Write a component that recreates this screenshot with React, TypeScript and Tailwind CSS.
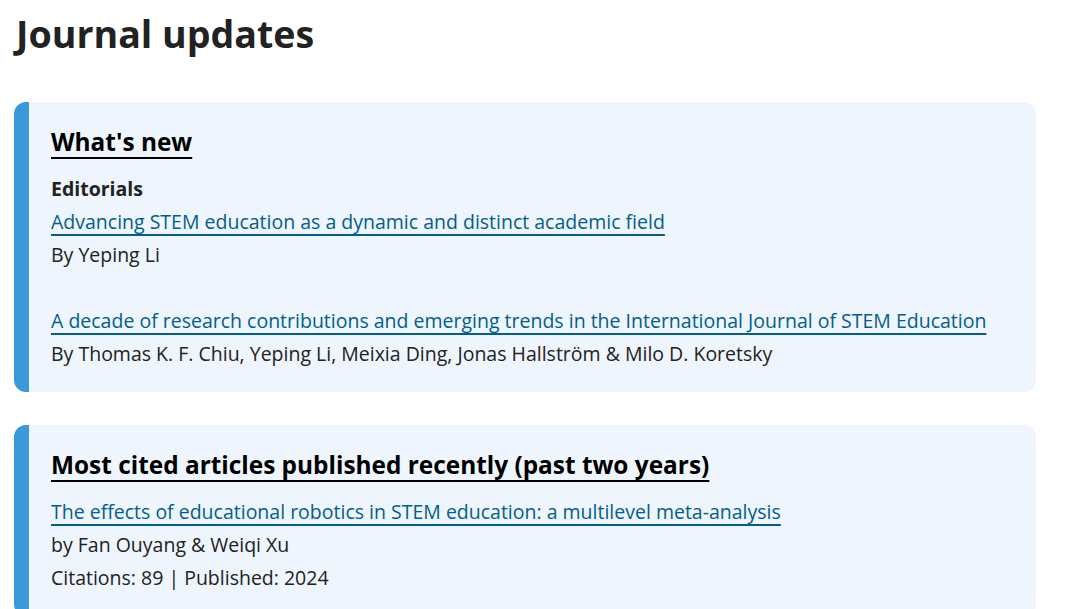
const font = { fontFamily: '"Open Sans", "Noto Sans", sans-serif' };

type Article = { title: string; authors: string; meta?: string };

function ArticleItem({ a }: { a: Article }) {
  return (
    <div>
      <a href="#" className="text-[#025e8d] underline decoration-[1.5px] underline-offset-[5px] leading-[33px]">
        {a.title}
      </a>
      <p className="leading-[33px] text-[#222]">{a.authors}</p>
      {a.meta && <p className="leading-[33px] text-[#222]">{a.meta}</p>}
    </div>
  );
}

function Card({ title, children }: { title: string; children: React.ReactNode }) {
  return (
    <section className="rounded-xl border-l-[15px] border-[#3a9ad9] bg-[#eef5fc] pl-[22px] pr-6 pt-[18px] pb-[22px]">
      <h2 className="mb-[8px] text-[24.4px] font-bold leading-[44px] text-black">
        <span className="underline decoration-2 underline-offset-[6px]">{title}</span>
      </h2>
      {children}
    </section>
  );
}

export default function App() {
  return (
    <div style={font} className="min-h-screen bg-white pl-[14px] pt-[8px] pr-[44px] text-[19.5px]">
      <h1 className="mb-[42px] pl-[2px] text-[37.6px] font-bold leading-[52px] text-[#222]">Journal updates</h1>

      <div className="flex flex-col gap-[33px]">
        <Card title="What's new">
          <p className="font-bold leading-[33px] text-[#222]">Editorials</p>
          <div className="flex flex-col gap-[33px]">
            <ArticleItem a={{ title: 'Advancing STEM education as a dynamic and distinct academic field', authors: 'By Yeping Li' }} />
            <ArticleItem
              a={{
                title: 'A decade of research contributions and emerging trends in the International Journal of STEM Education',
                authors: 'By Thomas K. F. Chiu, Yeping Li, Meixia Ding, Jonas Hallström & Milo D. Koretsky',
              }}
            />
          </div>
        </Card>

        <Card title="Most cited articles published recently (past two years)">
          <ArticleItem
            a={{
              title: 'The effects of educational robotics in STEM education: a multilevel meta-analysis',
              authors: 'by Fan Ouyang & Weiqi Xu',
              meta: 'Citations: 89 | Published: 2024',
            }}
          />
        </Card>
      </div>
    </div>
  );
}
